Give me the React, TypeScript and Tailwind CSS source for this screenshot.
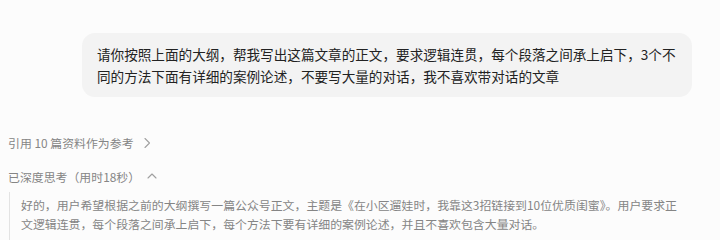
import React from "react";

export default function App() {
  return (
    <div
      className="w-[720px] h-[240px] overflow-hidden bg-[#fcfcfc]"
      style={{ fontFamily: '"Noto Sans CJK SC", "Noto Sans", sans-serif' }}
    >
      <div className="pt-[33px] flex justify-end pr-[28px]">
        <div className="w-[610px] bg-[#f3f3f3] rounded-[13px] px-[15px] py-[10px] text-[13.6px] leading-[22px] text-[#222222]">
          请你按照上面的大纲，帮我写出这篇文章的正文，要求逻辑连贯，每个段落之间承上启下，3个不同的方法下面有详细的案例论述，不要写大量的对话，我不喜欢带对话的文章
        </div>
      </div>

      <div className="pl-[8px] pr-[34px] mt-[36px]">
        <div className="flex items-center h-[20px] text-[11.9px] text-[#858585]">
          <span>引用 10 篇资料作为参考</span>
          <svg
            className="ml-[9px]"
            width="8"
            height="12"
            viewBox="0 0 8 12"
            fill="none"
            stroke="#a0a0a0"
            strokeWidth="1.1"
            strokeLinecap="round"
            strokeLinejoin="round"
          >
            <path d="M2 1.5 L6.5 6 L2 10.5" />
          </svg>
        </div>

        <div className="flex items-center h-[20px] mt-[14px] text-[11.9px] text-[#858585]">
          <span>已深度思考（用时18秒）</span>
          <svg
            className="ml-[7px] -mt-[3px]"
            width="10"
            height="8"
            viewBox="0 0 10 8"
            fill="none"
            stroke="#a0a0a0"
            strokeWidth="1.1"
            strokeLinecap="round"
            strokeLinejoin="round"
          >
            <path d="M1 6 L5 2 L9 6" />
          </svg>
        </div>

        <div className="mt-[5px] ml-[1px] border-l-[1.5px] border-[#e3e3e3] pl-[11px] pt-[3px] pb-[10px] text-[11.9px] leading-[19px] text-[#858585]">
          好的，用户希望根据之前的大纲撰写一篇公众号正文，主题是《在小区遛娃时，我靠这3招链接到10位优质闺蜜》。用户要求正文逻辑连贯，每个段落之间承上启下，每个方法下要有详细的案例论述，并且不喜欢包含大量对话。
        </div>
      </div>
    </div>
  );
}
